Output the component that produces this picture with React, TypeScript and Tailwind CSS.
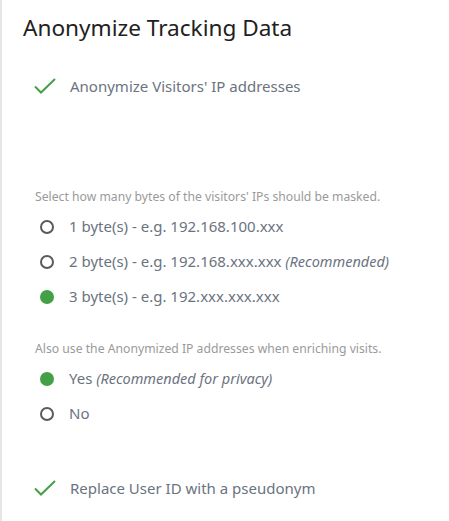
import React from "react";

function Check() {
  return (
    <svg width="24" height="18" viewBox="0 0 24 18" className="shrink-0">
      <path d="M2 9.5 L8 15.5 L22 2" fill="none" stroke="#43a047" strokeWidth="2" />
    </svg>
  );
}

function Radio({ checked }: { checked?: boolean }) {
  return checked ? (
    <span className="block w-[14px] h-[14px] rounded-full bg-[#43a047] shrink-0" />
  ) : (
    <span className="block w-[14px] h-[14px] rounded-full border-2 border-[#5a5a5a] shrink-0" />
  );
}

function Option({ checked, label, note }: { checked?: boolean; label: string; note?: string }) {
  return (
    <div className="flex items-center h-[35px] pl-[38px]">
      <Radio checked={checked} />
      <span className="ml-[15px] text-[15px] text-[#6b7380]">
        {label}
        {note && <em className="text-[14.5px] italic"> {note}</em>}
      </span>
    </div>
  );
}

export default function App() {
  return (
    <div
      className="w-[449px] h-[521px] bg-white border-l-2 border-[#e6e6e6] overflow-hidden"
      style={{ fontFamily: '"Noto Sans", "Open Sans", sans-serif' }}
    >
      <h1 className="pl-[21px] pt-[12px] text-[22.6px] text-[#212121] leading-[32px]">Anonymize Tracking Data</h1>
      <div className="flex items-center pl-[31px] mt-[30px] h-[24px]">
        <Check />
        <span className="ml-[13px] text-[15px] text-[#6b7380]">Anonymize Visitors' IP addresses</span>
      </div>
      <p className="pl-[33px] mt-[90px] text-[12.2px] text-[#9a9a9a] leading-[18px]">
        Select how many bytes of the visitors' IPs should be masked.
      </p>
      <div className="mt-[3px]">
        <Option label="1 byte(s) - e.g. 192.168.100.xxx" />
        <Option label="2 byte(s) - e.g. 192.168.xxx.xxx" note="(Recommended)" />
        <Option checked label="3 byte(s) - e.g. 192.xxx.xxx.xxx" />
      </div>
      <p className="pl-[33px] mt-[26px] text-[12.2px] text-[#9a9a9a] leading-[18px]">
        Also use the Anonymized IP addresses when enriching visits.
      </p>
      <div className="mt-[3px]">
        <Option checked label="Yes" note="(Recommended for privacy)" />
        <Option label="No" />
      </div>
      <div className="flex items-center pl-[31px] mt-[45px] h-[24px]">
        <Check />
        <span className="ml-[13px] text-[15px] text-[#6b7380]">Replace User ID with a pseudonym</span>
      </div>
    </div>
  );
}
